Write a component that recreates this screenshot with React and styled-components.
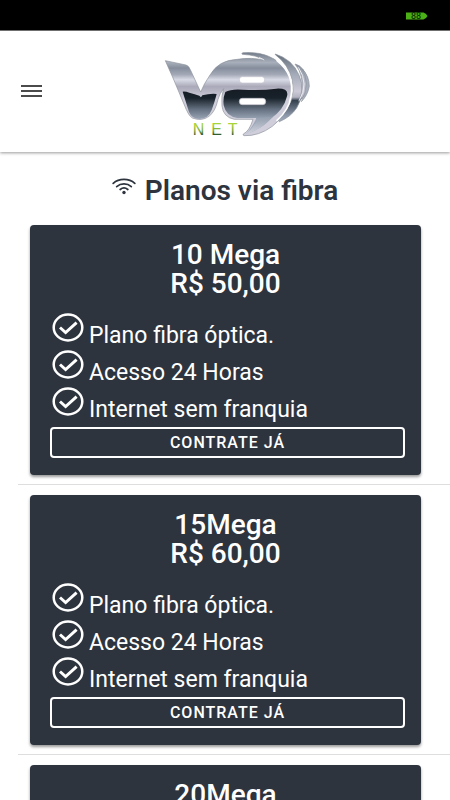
import React from "react";
import styled, { createGlobalStyle } from "styled-components";

const GlobalStyle = createGlobalStyle`
  *, *::before, *::after { box-sizing: border-box; }
  body {
    margin: 0;
    background: #fff;
    font-family: Roboto, "Liberation Sans", sans-serif;
    color: #2d343e;
  }
`;

const Screen = styled.div`
  display: flex;
  flex-direction: column;
  height: 100vh;
`;

const StatusBar = styled.div`
  display: flex;
  flex: none;
  align-items: center;
  justify-content: flex-end;
  height: 31px;
  padding: 2px 22px 0 0;
  background: #000;
  border-bottom: 1px solid #777;
`;

const Header = styled.header`
  position: relative;
  z-index: 1;
  display: grid;
  flex: none;
  grid-template-columns: 44px 1fr 44px;
  align-items: center;
  height: 121px;
  padding: 0 0 0 10px;
  background: #fff;
  box-shadow: 0 1px 3px rgba(0, 0, 0, 0.4);
`;

const MenuButton = styled.button`
  display: grid;
  place-items: center;
  height: 46px;
  padding: 0 0 2px;
  border: 0;
  background: none;
  color: #4b4b4b;
  cursor: pointer;
`;

const Brand = styled.div`
  display: flex;
  justify-content: center;
  padding: 5px 0 0 14px;
`;

const Content = styled.main`
  flex: 1;
  min-height: 0;
  overflow-y: auto;
  scrollbar-width: none;
`;

const PageTitle = styled.h1`
  display: flex;
  justify-content: center;
  gap: 9px;
  margin: 0;
  padding: 23px 0 10px;
  font-size: 28px;
  font-weight: 600;
  line-height: 32px;
`;

const WifiSlot = styled.span`
  display: flex;
  padding-top: 3px;
`;

const PlanList = styled.ul`
  margin: 0 0 0 18px;
  padding: 0;
  list-style: none;
`;

const PlanItem = styled.li`
  padding: 10px 29px 9px 12px;
  border-bottom: 1px solid #dedede;

  &:first-child { padding-top: 8px; }
`;

const Card = styled.article`
  padding: 15px 16px 17px 20px;
  border-radius: 4px;
  background: #2d343e;
  color: #fff;
  box-shadow: 0 2px 3px rgba(0, 0, 0, 0.4);
`;

const PlanName = styled.h2`
  margin: 0;
  padding-right: 4px;
  font-size: 28px;
  font-weight: 500;
  line-height: 29px;
  text-align: center;
`;

const Features = styled.ul`
  margin: 0;
  padding: 15px 0 0;
  list-style: none;
`;

const Feature = styled.li`
  display: flex;
  gap: 5px;
  height: 37px;
  padding-left: 2px;
  font-size: 23px;
  line-height: 46px;
  white-space: nowrap;

  svg { flex: none; }
`;

const HireButton = styled.button`
  display: block;
  width: 100%;
  height: 31px;
  margin-top: 3px;
  padding: 0;
  border: 2px solid #fff;
  border-radius: 4px;
  background: none;
  color: #fff;
  font: 500 16px/24px Roboto, "Liberation Sans", sans-serif;
  letter-spacing: 1px;
  text-transform: uppercase;
  cursor: pointer;
`;

function Battery() {
  return (
    <svg width="22" height="8" viewBox="0 0 22 8" role="img" aria-label="88">
      <path d="M0 .5h17.5Q20 1 21.5 4 20 7 17.5 7.500H0z" fill="#4caf16" />
      <text x="10" y="7" textAnchor="middle" fontFamily="Roboto, sans-serif" fontSize="9" fontWeight="500" fill="#0b3300">88</text>
    </svg>
  );
}

function MenuIcon() {
  return (
    <svg width="22" height="14" viewBox="0 0 22 14" fill="currentColor" aria-hidden="true">
      <path d="M0 1h21v2H0zM0 6h21v2H0zM0 11h21v2H0z" />
    </svg>
  );
}

function WifiIcon() {
  return (
    <svg width="24" height="17" viewBox="0 0 24 17" fill="none" stroke="currentColor" strokeWidth="1.7" strokeLinecap="round" aria-hidden="true">
      <path d="M1.200 5.400C7 .1 17 .1 22.800 5.400M4.700 8.600C8.800 5 15.200 5 19.300 8.600M8.200 11.500C10.500 9.600 13.500 9.600 15.800 11.500" />
      <circle cx="12" cy="14.500" r="1.700" fill="currentColor" stroke="none" />
    </svg>
  );
}

function CheckIcon() {
  return (
    <svg width="32" height="29" viewBox="0 0 32 29" fill="none" stroke="currentColor" aria-hidden="true">
      <ellipse cx="16" cy="14.500" rx="14.300" ry="13" strokeWidth="2.500" />
      <path d="M8 14.500l5.600 5L24.600 9.700" strokeWidth="3" />
    </svg>
  );
}

function Logo() {
  return (
    <svg width="147" height="87" viewBox="45 32 441 261" role="img" aria-label="V8 NET">
      <defs>
        <linearGradient id="chrome" gradientUnits="userSpaceOnUse" x1="0" y1="36" x2="0" y2="175">
          <stop offset="0" stopColor="#717b88" />
          <stop offset=".22" stopColor="#a8afbb" />
          <stop offset=".34" stopColor="#858d9c" />
          <stop offset=".48" stopColor="#a4a9b7" />
          <stop offset=".59" stopColor="#d8dbe5" />
          <stop offset=".74" stopColor="#aaa9b9" />
          <stop offset="1" stopColor="#d0cedb" />
        </linearGradient>
        <linearGradient id="dark" gradientUnits="userSpaceOnUse" x1="0" y1="148" x2="0" y2="238">
          <stop offset="0" stopColor="#151c24" />
          <stop offset=".28" stopColor="#18222b" />
          <stop offset=".65" stopColor="#64707f" />
          <stop offset="1" stopColor="#9ca7b8" />
        </linearGradient>
        <linearGradient id="tail" gradientUnits="userSpaceOnUse" x1="0" y1="38" x2="0" y2="288">
          <stop offset="0" stopColor="#626c79" />
          <stop offset=".25" stopColor="#a2a9b7" />
          <stop offset=".46" stopColor="#cdcbd8" />
          <stop offset=".53" stopColor="#b4b3c1" />
          <stop offset=".57" stopColor="#35414e" />
          <stop offset=".75" stopColor="#8d99aa" />
          <stop offset="1" stopColor="#d9dbe4" />
        </linearGradient>
        <linearGradient id="leaf" x1="0" y1="0" x2="0" y2="1">
          <stop offset=".2" stopColor="#a7d436" />
          <stop offset=".55" stopColor="#79a83d" />
          <stop offset=".85" stopColor="#17452b" />
        </linearGradient>
      </defs>
      <g stroke="#8d929c" strokeWidth="2" strokeLinejoin="round">
        <path fill="url(#chrome)" d="M49 61L111 74Q119 76 124 88L155 155Q165 130 183 104Q209 59 265 57Q309 50 346 60Q325 44 280 42Q276 39 282 37Q337 33 375 56Q427 87 428 145Q428 213 370 258Q329 288 285 286Q281 285 283 281Q301 273 312 237H256Q222 230 219 197Q216 166 224 145Q212 159 207 177Q199 214 180 228Q158 244 130 233Q119 226 112 208L72 113Z" />
        <path fill="url(#tail)" d="M379 41Q430 57 450 104Q472 154 443 203Q425 230 391 244Q386 242 389 237Q444 183 430 119Q418 72 379 43Z" />
        <path fill="url(#tail)" d="M439 71Q465 78 476 117Q479 164 449 183Q465 145 457 111Q452 86 439 73Z" />
        <path fill="#a5acba" d="M460 86Q481 108 481 138Q476 165 457 184Q470 160 472 130Q470 105 460 86Z" />
      </g>
      <path fill="url(#dark)" d="M101 154Q110 153 121 157Q138 162 151 166L156 171L160 165Q183 159 203 161Q197 185 188 209Q178 235 151 236Q128 235 120 215Z" />
      <path fill="url(#dark)" d="M229 155Q246 145 282 148Q338 151 382 145Q421 143 414 168Q404 210 364 236Q343 263 290 282Q312 259 322 233H265Q231 228 224 195Q221 174 229 155Z" />
      <path fill="url(#tail)" d="M328 232L372 229Q337 268 288 283Q313 264 328 232Z" />
      <path fill="none" stroke="#fff" strokeWidth="5" strokeLinecap="round" d="M384 61Q437 103 426 167Q420 209 384 240" />
      <path fill="none" stroke="#e8eaf0" strokeWidth="3" strokeLinecap="round" d="M331 52Q340 54 345 59M449 82Q481 131 451 180" />
      <rect x="271" y="109" width="76" height="19" rx="9" fill="#fff" stroke="#c4c2cd" strokeWidth="2" />
      <rect x="271" y="174" width="79" height="19" rx="9" fill="#fff" stroke="#c4c2cd" strokeWidth="2" />
      <text y="285" fontFamily="Liberation Sans, sans-serif" fontSize="48" fill="url(#leaf)">
        <tspan x="131">N</tspan><tspan x="187">E</tspan><tspan x="236">T</tspan>
      </text>
    </svg>
  );
}

const features = ["Plano fibra óptica.", "Acesso 24 Horas", "Internet sem franquia"];
const plans = [
  { name: "10 Mega", price: "R$ 50,00" },
  { name: "15Mega", price: "R$ 60,00" },
  { name: "20Mega", price: "R$ 70,00" },
];

function Plan({ name, price }) {
  return (
    <PlanItem>
      <Card>
        <PlanName>{name}<br />{price}</PlanName>
        <Features>
          {features.map((feature) => (
            <Feature key={feature}><CheckIcon />{feature}</Feature>
          ))}
        </Features>
        <HireButton type="button">Contrate já</HireButton>
      </Card>
    </PlanItem>
  );
}

export default function App() {
  return (
    <Screen>
      <GlobalStyle />
      <StatusBar><Battery /></StatusBar>
      <Header>
        <MenuButton type="button" aria-label="Menu"><MenuIcon /></MenuButton>
        <Brand><Logo /></Brand>
      </Header>
      <Content>
        <PageTitle><WifiSlot><WifiIcon /></WifiSlot>Planos via fibra</PageTitle>
        <PlanList>
          {plans.map((plan) => <Plan key={plan.name} {...plan} />)}
        </PlanList>
      </Content>
    </Screen>
  );
}
